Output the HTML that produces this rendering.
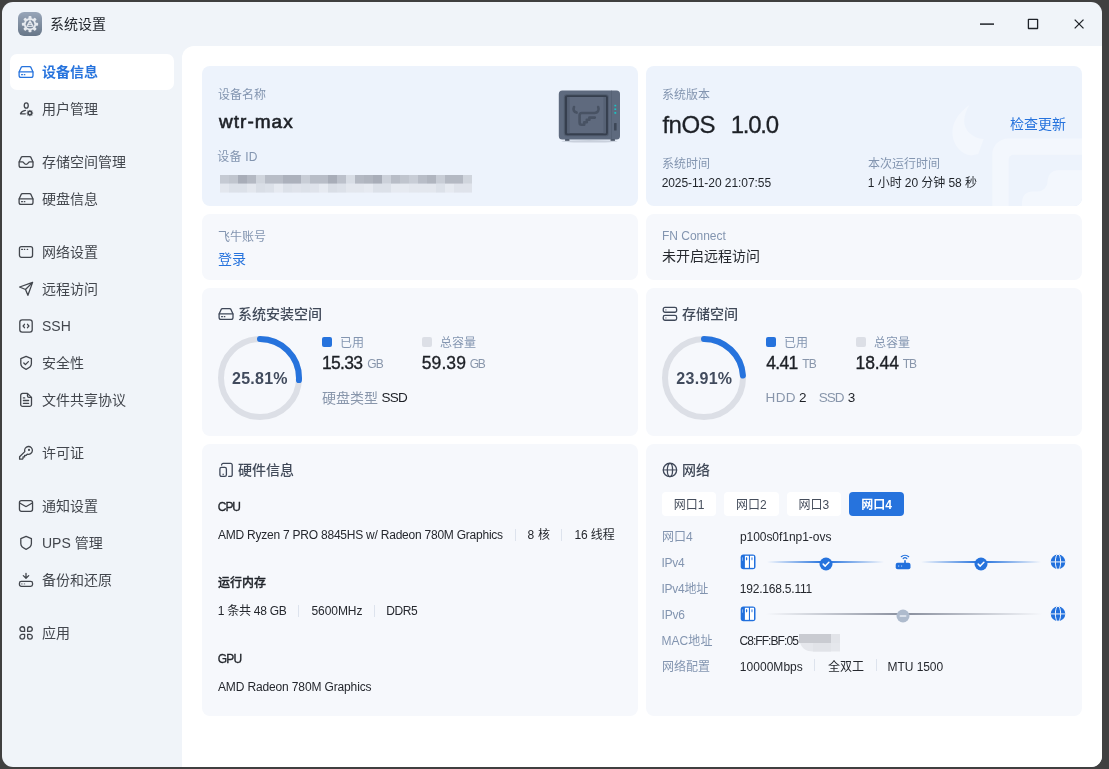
<!DOCTYPE html>
<html lang="zh-CN">
<head>
<meta charset="utf-8">
<title>系统设置</title>
<style>
*{box-sizing:border-box;margin:0;padding:0}
html,body{width:1109px;height:769px;overflow:hidden;background:#404040}
body{font-family:"Liberation Sans","Noto Sans CJK SC",sans-serif;color:#1f2329;position:relative;-webkit-font-smoothing:antialiased}
.win{position:absolute;left:2px;top:2px;width:1100px;height:765px;background:#f0f4f9;border-radius:11px;overflow:hidden}
.abs{position:absolute}
.t{position:absolute;white-space:nowrap;line-height:20px;height:20px}
.panel{position:absolute;left:182px;top:46px;width:920px;height:721px;background:#fff;border-top-left-radius:12px;border-bottom-right-radius:11px}
#stage{position:absolute;left:0;top:0;width:1109px;height:769px;will-change:transform}
.card{position:absolute;border-radius:8px;background:#f6f8fc;overflow:hidden}
.card.blue{background:#edf3fc}
.lbl{color:#8395b0;font-size:12px}
.nav{position:absolute;left:10px;width:164px;height:36px;border-radius:7px}
.nav.sel{background:#fff}
.nav svg{position:absolute;left:8px;top:10px;width:16px;height:16px;fill:none;stroke:#42464d;stroke-width:1.3;stroke-linecap:round;stroke-linejoin:round}
.nav.sel svg{stroke:#2673dd}
.nav span{position:absolute;left:32px;top:8px;line-height:20px;font-size:14px;color:#42464d;white-space:nowrap}
.nav.sel span{color:#2673dd;font-weight:700}

.hic{fill:none;stroke:#3f4859;stroke-width:1.300;stroke-linecap:round;stroke-linejoin:round}
.hd{font-size:12px;font-weight:500;color:#22262c;-webkit-text-stroke:0.300px #22262c}
.v{font-size:12px;color:#25282e}
.sep{position:absolute;width:1px;height:12px;background:#dde3ed}
.n{font-size:17.500px;color:#1d2026;-webkit-text-stroke:0.350px #1d2026}
.u{font-size:12px;color:#8896ab}
.k{font-size:13.500px;color:#1d2026}
.k.g{color:#8896ab}
.tab{position:absolute;top:492px;width:55px;height:24px;border-radius:4px;background:#fff;font-size:12px;line-height:26px;text-align:center;color:#464e5c;white-space:nowrap;overflow:hidden}
.tab.on{background:#2673dd;color:#fff;font-weight:700}
</style>
</head>
<body>
<div class="win"></div>
<div id="stage">
  <!-- titlebar -->
  <div class="abs" id="appicon" style="left:18px;top:12px;width:24px;height:24px;border-radius:6px;background:linear-gradient(#98a6b9,#677688)">
    <svg width="24" height="24" viewBox="0 0 24 24"><g fill="#e6eaef"><circle cx="12" cy="12.200" r="6.100"/><rect x="10.500" y="4.100" width="3" height="16.200" rx="0.800"/><rect x="10.500" y="4.100" width="3" height="16.200" rx="0.800" transform="rotate(45 12 12.200)"/><rect x="10.500" y="4.100" width="3" height="16.200" rx="0.800" transform="rotate(90 12 12.200)"/><rect x="10.500" y="4.100" width="3" height="16.200" rx="0.800" transform="rotate(135 12 12.200)"/></g><circle cx="12" cy="12.200" r="4.300" fill="#7b899c"/><path d="M12 8.300L15.400 14.400H8.600Z" fill="#e6eaef" stroke="#e6eaef" stroke-width="0.800" stroke-linejoin="round"/><circle cx="12" cy="11.700" r="0.700" fill="#8b98aa"/><path d="M10.300 13.500h3.400" stroke="#7b899c" stroke-width="0.900"/></svg>
  </div>
  <div class="t" style="left:50px;top:14px;font-size:14px;color:#22262d">系统设置</div>
  <svg class="abs" style="left:972px;top:12px" width="124" height="24" viewBox="0 0 124 24" fill="none" stroke="#1f2329" stroke-width="1.3">
    <path d="M8 12.100H22" stroke-width="1.500"/>
    <rect x="56.400" y="7.300" width="9.200" height="9.200" rx="0.300"/>
    <path d="M102.700 7.600L111.500 16.400M111.500 7.600L102.700 16.400"/>
  </svg>

  <!-- sidebar placeholder -->
  <div class="nav sel" style="top:54px"><svg viewBox="0 0 16 16"><path d="M4.500 2.550h7.100a1.500 1.500 0 0 1 1.350.850l2.050 4.600v3.450a1.900 1.900 0 0 1-1.900 1.900H3a1.900 1.900 0 0 1-1.900-1.900V8l2.050-4.600a1.500 1.500 0 0 1 1.350-.850z"/><path d="M1.300 7.900h13.500"/><path d="M3.600 10.700h.800M6.300 10.700h.500"/></svg><span>设备信息</span></div>
  <div class="nav" style="top:91px"><svg viewBox="0 0 16 16"><ellipse cx="8.250" cy="4.500" rx="2" ry="2.700"/><path d="M7.500 9.400C5 9.700 3.200 11 2.500 12.800h4.800"/><g stroke-width="1.100"><circle cx="11.900" cy="12" r="1.750" stroke-width="1.500"/><path d="M11.900 9.200v.700M11.900 14.100v.700M9.100 12h.700M14 12h.700M9.900 10l.500.500M13.400 13.500l.500.500M13.900 10l-.500.500M10.400 13.500l-.500.500"/></g></svg><span>用户管理</span></div>
  <div class="nav" style="top:144px"><svg viewBox="0 0 16 16"><path d="M4.500 2.550h7.100a1.500 1.500 0 0 1 1.350.850l2.050 4.600v3.450a1.900 1.900 0 0 1-1.900 1.900H3a1.900 1.900 0 0 1-1.900-1.900V8l2.050-4.600a1.500 1.500 0 0 1 1.350-.850z"/><path d="M1.300 7.900h3.200c1.300 0 1.500 2.500 3.550 2.500s2.250-2.500 3.550-2.500h3.200"/></svg><span>存储空间管理</span></div>
  <div class="nav" style="top:181px"><svg viewBox="0 0 16 16"><path d="M4.500 2.550h7.100a1.500 1.500 0 0 1 1.350.850l2.050 4.600v3.450a1.900 1.900 0 0 1-1.900 1.900H3a1.900 1.900 0 0 1-1.900-1.900V8l2.050-4.600a1.500 1.500 0 0 1 1.350-.850z"/><path d="M1.300 7.900h13.500"/><path d="M3.600 10.700h.800M6.300 10.700h.500"/></svg><span>硬盘信息</span></div>
  <div class="nav" style="top:234px"><svg viewBox="0 0 16 16"><rect x="1.450" y="2.550" width="13.100" height="10.800" rx="2"/><path d="M3.700 5.400h.700M6.400 5.400h.300M9.300 5.400h.300"/></svg><span>网络设置</span></div>
  <div class="nav" style="top:271px"><svg viewBox="0 0 16 16"><path d="M14.600 1.400L1.600 6l5.900 2.500 2.400 5.800zM7.500 8.500l7.100-7.100"/></svg><span>远程访问</span></div>
  <div class="nav" style="top:308px"><svg viewBox="0 0 16 16"><rect x="1.800" y="1.800" width="12.400" height="12.400" rx="2.400"/><path d="M6.500 6.300L5.100 8l1.400 1.700M9.500 6.300L10.900 8 9.500 9.700"/></svg><span>SSH</span></div>
  <div class="nav" style="top:345px"><svg viewBox="0 0 16 16"><path d="M8.100 1.400l5.300 2.200v5c0 2.800-2.400 4.600-5.300 5.700-2.900-1.100-5.300-2.900-5.300-5.700v-5z"/><path d="M5.800 8l1.600 1.600 3-3"/></svg><span>安全性</span></div>
  <div class="nav" style="top:382px"><svg viewBox="0 0 16 16"><path d="M4.600 1.400h4.900l4 4v7.100a1.900 1.900 0 0 1-1.900 1.900h-7a1.900 1.900 0 0 1-1.900-1.900V3.300a1.900 1.900 0 0 1 1.900-1.900z"/><path d="M9.500 1.700v2.300a1.400 1.400 0 0 0 1.400 1.400h2.300M5.400 5.900h1.300M5.400 8.500h5.200M5.400 11.300h5.200"/></svg><span>文件共享协议</span></div>
  <div class="nav" style="top:435px"><svg viewBox="0 0 16 16"><path d="M6.800 6.600A3.900 3.900 0 1 1 9.300 9.100L8.200 10.300H6.600v1.600H5v1.600l-.7.700H1.600v-2.400z"/><circle cx="11" cy="4.900" r="0.500" stroke-width="1.100"/></svg><span>许可证</span></div>
  <div class="nav" style="top:488px"><svg viewBox="0 0 16 16"><rect x="1.450" y="2.550" width="13.100" height="10.800" rx="2"/><path d="M1.700 5l5.600 3.300a1.400 1.400 0 0 0 1.400 0L14.300 5"/></svg><span>通知设置</span></div>
  <div class="nav" style="top:525px"><svg viewBox="0 0 16 16"><path d="M8.100 1.400l5.300 2.200v5c0 2.800-2.400 4.600-5.300 5.700-2.900-1.100-5.300-2.900-5.300-5.700v-5z"/></svg><span>UPS 管理</span></div>
  <div class="nav" style="top:562px"><svg viewBox="0 0 16 16"><path d="M8 1.300v4.800M5.300 3.600L8 6.300l2.700-2.700"/><rect x="1.450" y="9.400" width="13.100" height="5" rx="1.800"/><path d="M3.600 11.900h.500M6.300 11.900h.300" stroke-opacity=".6"/></svg><span>备份和还原</span></div>
  <div class="nav" style="top:615px"><svg viewBox="0 0 16 16"><path d="M6.600 6.450H4.250A2.350 2.350 0 1 1 6.600 4.100zM9.600 6.450h2.350A2.350 2.350 0 1 0 9.600 4.100zM6.600 9.450H4.250A2.350 2.350 0 1 0 6.600 11.800zM9.600 9.450h2.350A2.350 2.350 0 1 1 9.600 11.800z"/></svg><span>应用</span></div>

  <!-- content panel -->
  <div class="panel" id="panel"></div>
  <!-- row 1 -->
  <div class="card blue" style="left:202px;top:66px;width:436px;height:140px"></div>
  <div class="t lbl" style="left:218px;top:85px">设备名称</div>
  <div class="t" style="left:219.10px;top:112px;font-size:19px;font-weight:400;color:#1d2026;-webkit-text-stroke:0.600px #1d2026;letter-spacing:1.00px">wtr-max</div>
  <div class="t lbl" style="left:217.20px;top:147px;letter-spacing:0.21px">设备 ID</div>
  <svg class="abs" style="left:219.500px;top:175.300px" width="252" height="17.600" viewBox="0 0 252 18" preserveAspectRatio="none"><rect x="0" y="0" width="9.2" height="9" fill="#c5cad3"/><rect x="9" y="0" width="9.2" height="9" fill="#c0c5ce"/><rect x="18" y="0" width="9.2" height="9" fill="#a8adb8"/><rect x="27" y="0" width="9.2" height="9" fill="#b4b9c3"/><rect x="36" y="0" width="9.2" height="9" fill="#d0d5dd"/><rect x="45" y="0" width="9.2" height="9" fill="#b8bdc7"/><rect x="54" y="0" width="9.2" height="9" fill="#b8bdc7"/><rect x="63" y="0" width="9.2" height="9" fill="#acb1bc"/><rect x="72" y="0" width="9.2" height="9" fill="#acb1bc"/><rect x="81" y="0" width="9.2" height="9" fill="#c8cdd6"/><rect x="90" y="0" width="9.2" height="9" fill="#b8bdc7"/><rect x="99" y="0" width="9.2" height="9" fill="#b8bdc7"/><rect x="108" y="0" width="9.2" height="9" fill="#a8adb8"/><rect x="117" y="0" width="9.2" height="9" fill="#bcc1cb"/><rect x="126" y="0" width="9.2" height="9" fill="#d8dde5"/><rect x="135" y="0" width="9.2" height="9" fill="#b4b9c3"/><rect x="144" y="0" width="9.2" height="9" fill="#b0b5bf"/><rect x="153" y="0" width="9.2" height="9" fill="#a8adb8"/><rect x="162" y="0" width="9.2" height="9" fill="#ccd1da"/><rect x="171" y="0" width="9.2" height="9" fill="#b8bdc7"/><rect x="180" y="0" width="9.2" height="9" fill="#c0c5ce"/><rect x="189" y="0" width="9.2" height="9" fill="#c8cdd6"/><rect x="198" y="0" width="9.2" height="9" fill="#b8bdc7"/><rect x="207" y="0" width="9.2" height="9" fill="#b0b5bf"/><rect x="216" y="0" width="9.2" height="9" fill="#c8cdd6"/><rect x="225" y="0" width="9.2" height="9" fill="#b4b9c3"/><rect x="234" y="0" width="9.2" height="9" fill="#b4b9c3"/><rect x="243" y="0" width="9.2" height="9" fill="#d0d5dd"/><rect x="0" y="9" width="9.2" height="9" fill="#e3e7ee"/><rect x="9" y="9" width="9.2" height="9" fill="#dce1e9"/><rect x="18" y="9" width="9.2" height="9" fill="#dce1e9"/><rect x="27" y="9" width="9.2" height="9" fill="#e3e7ee"/><rect x="36" y="9" width="9.2" height="9" fill="#d9dee6"/><rect x="45" y="9" width="9.2" height="9" fill="#dce1e9"/><rect x="54" y="9" width="9.2" height="9" fill="#e6eaf1"/><rect x="63" y="9" width="9.2" height="9" fill="#dce1e9"/><rect x="72" y="9" width="9.2" height="9" fill="#dfe3eb"/><rect x="81" y="9" width="9.2" height="9" fill="#dce1e9"/><rect x="90" y="9" width="9.2" height="9" fill="#dfe3eb"/><rect x="99" y="9" width="9.2" height="9" fill="#e6eaf1"/><rect x="108" y="9" width="9.2" height="9" fill="#d9dee6"/><rect x="117" y="9" width="9.2" height="9" fill="#dce1e9"/><rect x="126" y="9" width="9.2" height="9" fill="#e3e7ee"/><rect x="135" y="9" width="9.2" height="9" fill="#e3e7ee"/><rect x="144" y="9" width="9.2" height="9" fill="#e6eaf1"/><rect x="153" y="9" width="9.2" height="9" fill="#dce1e9"/><rect x="162" y="9" width="9.2" height="9" fill="#dce1e9"/><rect x="171" y="9" width="9.2" height="9" fill="#e6eaf1"/><rect x="180" y="9" width="9.2" height="9" fill="#e6eaf1"/><rect x="189" y="9" width="9.2" height="9" fill="#e3e7ee"/><rect x="198" y="9" width="9.2" height="9" fill="#e3e7ee"/><rect x="207" y="9" width="9.2" height="9" fill="#e3e7ee"/><rect x="216" y="9" width="9.2" height="9" fill="#dce1e9"/><rect x="225" y="9" width="9.2" height="9" fill="#e6eaf1"/><rect x="234" y="9" width="9.2" height="9" fill="#dfe3eb"/><rect x="243" y="9" width="9.2" height="9" fill="#dfe3eb"/></svg>
  <svg class="abs" style="left:556px;top:88px" width="68" height="56" viewBox="0 0 68 56">
    <ellipse cx="33.500" cy="53.300" rx="28" ry="1.200" fill="#c9d0dc"/>
    <rect x="9" y="51" width="4.500" height="1.800" rx="0.600" fill="#3a4454"/><rect x="54.500" y="51" width="4.500" height="1.800" rx="0.600" fill="#3a4454"/>
    <rect x="2.800" y="2.600" width="61.200" height="49" rx="3.500" fill="#5e6a7e"/>
    <rect x="55.200" y="2.600" width="0.700" height="49" fill="#525d70"/>
    <rect x="7.800" y="6.200" width="45" height="42" rx="2.800" fill="#525d6f"/>
    <rect x="8.800" y="7.200" width="43.100" height="40.100" rx="2.200" fill="#363f4e"/>
    <rect x="11.300" y="9.100" width="38.500" height="36.200" rx="0.500" fill="#5f6a7e"/>
    <rect x="11.300" y="9.100" width="2.400" height="36.200" fill="#566174"/><rect x="47.400" y="9.100" width="2.400" height="36.200" fill="#566174"/>
    <g fill="none" stroke="#485263" stroke-width="2.600" stroke-linecap="round" stroke-linejoin="round"><path d="M18 19c-1.200 2.800 0 5 2.600 5.600"/><path d="M42.200 19c1.400 3.400-0.600 6-3.800 6H25.800c-1.400 0-2.200 0.800-2.200 2.200v7.600c0 1.200 0.800 2 2 2h2.600v-2.600h2.600v-2.400h2.600v-2.200h5.400"/></g>
    <rect x="58.400" y="16.800" width="1.800" height="1.600" fill="#19c2c2"/><rect x="58.400" y="20.400" width="1.800" height="1.600" fill="#19c2c2"/><rect x="58.400" y="24" width="1.800" height="1.800" fill="#19c2c2"/>
    <rect x="58" y="35" width="2.600" height="7.600" rx="0.600" fill="#3d4757"/>
  </svg>

  <div class="card blue" style="left:646px;top:66px;width:436px;height:140px">
    <svg class="abs" style="left:0;top:0" width="436" height="140" viewBox="0 0 436 140"><g fill="#f3f7fd"><path d="M323.600 38.800C312 47 305.500 58 306.500 68.500C307.500 80 316 88.500 325.200 89.500L332.200 88L337.700 73.100C326 72 318 64 318.200 55.200C318.300 49 320.500 43.500 323.600 38.800Z"/><path d="M362.300 72.400H436V140H346.300V88.400A16 16 0 0 1 362.300 72.400Z"/></g><path d="M367.600 88.700H436V140H362.600V93.700A5 5 0 0 1 367.600 88.700Z" fill="#edf3fc"/><path d="M411.600 104.300H436V140H376V135.400A10 10 0 0 1 386 125.400H391.600A10 10 0 0 0 401.600 115.400V114.300A10 10 0 0 1 411.600 104.300Z" fill="#f3f7fd"/></svg>
  </div>
  <div class="t lbl" style="left:662px;top:85px">系统版本</div>
  <div class="t" style="left:662.51px;top:115px;font-size:24px;color:#1d2026;-webkit-text-stroke:0.300px #1d2026;letter-spacing:-0.56px">fnOS</div>
  <div class="t" style="left:730.69px;top:115px;font-size:24px;color:#1d2026;-webkit-text-stroke:0.300px #1d2026;letter-spacing:-1.25px">1.0.0</div>
  <div class="t" style="left:1010px;top:114px;font-size:14px;color:#2673dd">检查更新</div>
  <div class="t lbl" style="left:662px;top:153.500px">系统时间</div>
  <div class="t" style="left:661.64px;top:173px;font-size:12px;color:#1f2329;letter-spacing:-0.06px">2025-11-20 21:07:55</div>
  <div class="t lbl" style="left:868px;top:153.500px">本次运行时间</div>
  <div class="t" style="left:867.85px;top:173px;font-size:12px;color:#1f2329;letter-spacing:-0.07px">1 小时 20 分钟 58 秒</div>

  <!-- row 2 -->
  <div class="card" style="left:202px;top:214px;width:436px;height:66px"></div>
  <div class="t lbl" style="left:218px;top:227px">飞牛账号</div>
  <div class="t" style="left:218px;top:249px;font-size:14px;color:#2673dd">登录</div>
  <div class="card" style="left:646px;top:214px;width:436px;height:66px"></div>
  <div class="t lbl" style="left:662px;top:226px;letter-spacing:-0.03px">FN Connect</div>
  <div class="t" style="left:662px;top:246px;font-size:14px;color:#25282e">未开启远程访问</div>


  <!-- row 3 -->
  <div class="card" style="left:202px;top:288px;width:436px;height:148px"></div>
  <svg class="abs hic" style="left:218px;top:306px" width="16" height="16" viewBox="0 0 16 16"><path d="M4.500 2.550h7.100a1.500 1.500 0 0 1 1.350.850l2.050 4.600v3.450a1.900 1.900 0 0 1-1.900 1.900H3a1.900 1.900 0 0 1-1.900-1.900V8l2.050-4.600a1.500 1.500 0 0 1 1.350-.850z"/><path d="M1.300 7.900h13.500"/><path d="M3.600 10.700h.800M6.300 10.700h.500"/></svg>
  <div class="t" style="left:238px;top:304px;font-size:14px;font-weight:500;color:#414a59">系统安装空间</div>
  <svg class="abs" style="left:216px;top:334px" width="88" height="88" viewBox="0 0 88 88" fill="none"><circle cx="44" cy="44" r="39" stroke="#dcdfe6" stroke-width="6"/><circle cx="44" cy="44" r="39" stroke="#2673dd" stroke-width="6" stroke-linecap="round" stroke-dasharray="63.25 245.04" transform="rotate(-90 44 44)"/></svg>
  <div class="t" style="left:219.95px;width:80px;text-align:center;top:369px;font-size:16px;font-weight:700;color:#414b5d;letter-spacing:0.26px">25.81%</div>
  <div class="abs" style="left:322px;top:337px;width:9.600px;height:9.600px;border-radius:2px;background:#2673dd"></div><div class="t lbl" style="left:340px;top:333px">已用</div>
  <div class="t n" style="left:321.88px;top:353px;letter-spacing:-0.65px">15.33</div><div class="t u" style="left:367.26px;top:354px;letter-spacing:-0.94px">GB</div>
  <div class="abs" style="left:422px;top:337px;width:9.600px;height:9.600px;border-radius:2px;background:#dcdfe6"></div><div class="t lbl" style="left:440px;top:333px">总容量</div>
  <div class="t n" style="left:421.78px;top:353px;letter-spacing:0.09px">59.39</div><div class="t u" style="left:469.70px;top:354px;letter-spacing:-1.27px">GB</div>
  <div class="t" style="left:322px;top:388px;font-size:14px;color:#8896ab">硬盘类型</div><div class="t k" style="left:381.53px;top:388px;letter-spacing:-0.75px">SSD</div>

  <div class="card" style="left:646px;top:288px;width:436px;height:148px"></div>
  <svg class="abs hic" style="left:662px;top:306px" width="16" height="16" viewBox="0 0 16 16"><rect x="1.250" y="1.450" width="13.400" height="4.800" rx="1.700"/><rect x="1.250" y="9.450" width="13.400" height="4.800" rx="1.700"/><path d="M3.600 3.900h.500M3.600 11.900h.500" stroke-opacity=".5"/></svg>
  <div class="t" style="left:682px;top:304px;font-size:14px;font-weight:500;color:#414a59">存储空间</div>
  <svg class="abs" style="left:660px;top:334px" width="88" height="88" viewBox="0 0 88 88" fill="none"><circle cx="44" cy="44" r="39" stroke="#dcdfe6" stroke-width="6"/><circle cx="44" cy="44" r="39" stroke="#2673dd" stroke-width="6" stroke-linecap="round" stroke-dasharray="58.59 245.04" transform="rotate(-90 44 44)"/></svg>
  <div class="t" style="left:664.35px;width:80px;text-align:center;top:369px;font-size:16px;font-weight:700;color:#414b5d;letter-spacing:0.30px">23.91%</div>
  <div class="abs" style="left:766px;top:337px;width:9.600px;height:9.600px;border-radius:2px;background:#2673dd"></div><div class="t lbl" style="left:784px;top:333px">已用</div>
  <div class="t n" style="left:766.32px;top:353px;letter-spacing:-0.69px">4.41</div><div class="t u" style="left:802.36px;top:354px;letter-spacing:-0.87px">TB</div>
  <div class="abs" style="left:856px;top:337px;width:9.600px;height:9.600px;border-radius:2px;background:#dcdfe6"></div><div class="t lbl" style="left:874px;top:333px">总容量</div>
  <div class="t n" style="left:855.55px;top:353px;letter-spacing:-0.12px">18.44</div><div class="t u" style="left:902.74px;top:354px;letter-spacing:-1.18px">TB</div>
  <div class="t k g" style="left:765.52px;top:388px;letter-spacing:0.42px">HDD</div><div class="t k" style="left:799.08px;top:388px">2</div><div class="t k g" style="left:818.77px;top:388px;letter-spacing:-0.99px">SSD</div><div class="t k" style="left:847.78px;top:388px">3</div>

  <!-- row 4 left -->
  <div class="card" style="left:202px;top:444px;width:436px;height:272px"></div>
  <svg class="abs hic" style="left:218px;top:462px" width="16" height="16" viewBox="0 0 16 16"><path d="M3.600 3V2.950a1.500 1.500 0 0 1 1.500-1.500h7.600a1.500 1.500 0 0 1 1.500 1.500v10a1.500 1.500 0 0 1-1.500 1.500h-2"/><rect x="1.900" y="5.400" width="6.500" height="9" rx="1.600"/><path d="M5.150 12.200v.3"/></svg>
  <div class="t" style="left:238px;top:460px;font-size:14px;font-weight:500;color:#414a59">硬件信息</div>
  <div class="t hd" style="left:217.86px;top:497px;letter-spacing:-1.14px">CPU</div>
  <div class="t v" style="left:218.00px;top:525px;letter-spacing:-0.23px">AMD Ryzen 7 PRO 8845HS w/ Radeon 780M Graphics</div><i class="sep" style="left:515px;top:529px"></i><div class="t v" style="left:527.50px;top:525px;letter-spacing:0.28px">8 核</div><i class="sep" style="left:561px;top:529px"></i><div class="t v" style="left:574.55px;top:525px;letter-spacing:-0.13px">16 线程</div>
  <div class="t hd" style="left:218px;top:573px">运行内存</div>
  <div class="t v" style="left:217.79px;top:601px;letter-spacing:-0.26px">1 条共 48 GB</div><i class="sep" style="left:298px;top:605px"></i><div class="t v" style="left:311.43px;top:601px;letter-spacing:-0.06px">5600MHz</div><i class="sep" style="left:374px;top:605px"></i><div class="t v" style="left:386.15px;top:601px;letter-spacing:-0.35px">DDR5</div>
  <div class="t hd" style="left:217.86px;top:649px;letter-spacing:-0.83px">GPU</div>
  <div class="t v" style="left:218.00px;top:677px;letter-spacing:-0.14px">AMD Radeon 780M Graphics</div>

  <!-- row 4 right -->
  <div class="card" style="left:646px;top:444px;width:436px;height:272px"></div>
  <svg class="abs hic" style="left:662px;top:462px" width="16" height="16" viewBox="0 0 16 16"><circle cx="7.950" cy="7.950" r="6.700"/><path d="M1.300 7.950h13.300" stroke-width="1"/><ellipse cx="7.950" cy="7.950" rx="2.600" ry="6.600"/></svg>
  <div class="t" style="left:682px;top:460px;font-size:14px;font-weight:500;color:#414a59">网络</div>
  <div class="tab" style="left:662px;width:54.400px">网口1</div>
  <div class="tab" style="left:723.700px;width:55.100px">网口2</div>
  <div class="tab" style="left:786.800px;width:54.300px">网口3</div>
  <div class="tab on" style="left:849px;width:55px">网口4</div>
  <div class="t lbl" style="left:662px;top:527px">网口4</div>
  <div class="t v" style="left:739.88px;top:527px;letter-spacing:-0.04px">p100s0f1np1-ovs</div>
  <div class="t lbl" style="left:661.51px;top:553px;letter-spacing:-0.32px">IPv4</div>
  <div class="t lbl" style="left:661.51px;top:579px;letter-spacing:-0.26px">IPv4地址</div>
  <div class="t v" style="left:739.79px;top:579px;letter-spacing:-0.21px">192.168.5.111</div>
  <div class="t lbl" style="left:661.51px;top:605px;letter-spacing:-0.16px">IPv6</div>
  <div class="t lbl" style="left:661.44px;top:631px;letter-spacing:0.09px">MAC地址</div>
  <div class="t v" style="left:739.44px;top:631px;letter-spacing:-0.93px">C8:FF:BF:05</div>
  <div class="t lbl" style="left:662px;top:657px">网络配置</div>
  <div class="t v" style="left:739.79px;top:657px;letter-spacing:0.04px">10000Mbps</div><i class="sep" style="left:814px;top:659px"></i><div class="t v" style="left:828px;top:657px">全双工</div><i class="sep" style="left:876px;top:659px"></i><div class="t v" style="left:887.56px;top:657px;letter-spacing:-0.06px">MTU 1500</div>

  <svg class="abs" style="left:740px;top:554px" width="16" height="16" viewBox="0 0 16 16"><rect x="0.700" y="0.550" width="14.800" height="14.750" rx="2.700" fill="#2170dd"/><rect x="2.100" y="3.100" width="0.900" height="3.700" rx="0.400" fill="#8db6f0"/><rect x="4.900" y="1.800" width="4" height="12.050" fill="#fff"/><rect x="10" y="1.800" width="4" height="12.050" fill="#fff"/><ellipse cx="6.600" cy="4.700" rx="0.700" ry="1.700" fill="#2170dd"/><ellipse cx="12" cy="4.700" rx="0.700" ry="1.700" fill="#5f97e8"/></svg>
  <div class="abs" style="left:767px;top:561px;width:117px;height:2px;background:linear-gradient(90deg,rgba(38,115,221,0),#2673dd 48%,#2673dd 52%,rgba(38,115,221,0))"></div>
  <svg class="abs" style="left:819px;top:557px" width="14" height="14" viewBox="0 0 14 14"><circle cx="7" cy="7" r="6.500" fill="#2673dd"/><path d="M4.200 7.100l2 2 3.700-3.800" fill="none" stroke="#fff" stroke-width="1.500" stroke-linecap="round" stroke-linejoin="round"/></svg>
  <svg class="abs" style="left:895px;top:554px" width="16" height="16" viewBox="0 0 16 16"><rect x="0.700" y="8.750" width="14.800" height="6.550" rx="2" fill="#2170dd"/><rect x="9.200" y="6.200" width="1.600" height="3" fill="#2170dd"/><path d="M8.200 4.500a2.700 2.700 0 0 1 3.600 0M6.300 2.700a5.500 5.500 0 0 1 7.400 0" fill="none" stroke="#2170dd" stroke-width="1.200" stroke-linecap="round"/><rect x="3.100" y="11.400" width="1.100" height="1.300" fill="#a9c8f5"/><rect x="6.100" y="11.400" width="1" height="1.300" fill="#a9c8f5"/></svg>
  <div class="abs" style="left:921px;top:561px;width:120px;height:2px;background:linear-gradient(90deg,rgba(38,115,221,0),#2673dd 48%,#2673dd 52%,rgba(38,115,221,0))"></div>
  <svg class="abs" style="left:974px;top:557px" width="14" height="14" viewBox="0 0 14 14"><circle cx="7" cy="7" r="6.500" fill="#2673dd"/><path d="M4.200 7.100l2 2 3.700-3.800" fill="none" stroke="#fff" stroke-width="1.500" stroke-linecap="round" stroke-linejoin="round"/></svg>
  <svg class="abs" style="left:1050px;top:554px" width="16" height="16" viewBox="0 0 16 16"><circle cx="8" cy="7.850" r="7.300" fill="#2170dd"/><g fill="none" stroke="#f6f8fc"><ellipse cx="8" cy="7.850" rx="2.650" ry="7.700" stroke-width="1"/><path d="M0.500 7.900h15" stroke-width="1.300" stroke-opacity=".75"/></g></svg>
  <svg class="abs" style="left:740px;top:606px" width="16" height="16" viewBox="0 0 16 16"><rect x="0.700" y="0.550" width="14.800" height="14.750" rx="2.700" fill="#2170dd"/><rect x="2.100" y="3.100" width="0.900" height="3.700" rx="0.400" fill="#8db6f0"/><rect x="4.900" y="1.800" width="4" height="12.050" fill="#fff"/><rect x="10" y="1.800" width="4" height="12.050" fill="#fff"/><ellipse cx="6.600" cy="4.700" rx="0.700" ry="1.700" fill="#2170dd"/><ellipse cx="12" cy="4.700" rx="0.700" ry="1.700" fill="#5f97e8"/></svg>
  <div class="abs" style="left:766px;top:613px;width:276px;height:2px;background:linear-gradient(90deg,rgba(140,146,160,0),#8c92a0 48%,#8c92a0 52%,rgba(140,146,160,0))"></div>
  <svg class="abs" style="left:896px;top:609px" width="14" height="14" viewBox="0 0 14 14"><circle cx="7" cy="7" r="6.500" fill="#aebbcd"/><path d="M4.300 7h5.400" stroke="#e9eef5" stroke-width="1.600" stroke-linecap="round"/></svg>
  <svg class="abs" style="left:1050px;top:606px" width="16" height="16" viewBox="0 0 16 16"><circle cx="8" cy="7.850" r="7.300" fill="#2170dd"/><g fill="none" stroke="#f6f8fc"><ellipse cx="8" cy="7.850" rx="2.650" ry="7.700" stroke-width="1"/><path d="M0.500 7.900h15" stroke-width="1.300" stroke-opacity=".75"/></g></svg>
  <svg class="abs" style="left:799px;top:634px" width="41" height="18" viewBox="0 0 41 18"><path d="M0 0h32v9H0z" fill="#c9cbd1"/><path d="M32 0h9v9h-9z" fill="#e2e4e9"/><path d="M1 9h40v8.500H14C7 17.500 3 14 1 9z" fill="#e5e7ec"/><path d="M14 9h18v8.500H14z" fill="#e1e3e8"/></svg>


</div>
</body>
</html>
